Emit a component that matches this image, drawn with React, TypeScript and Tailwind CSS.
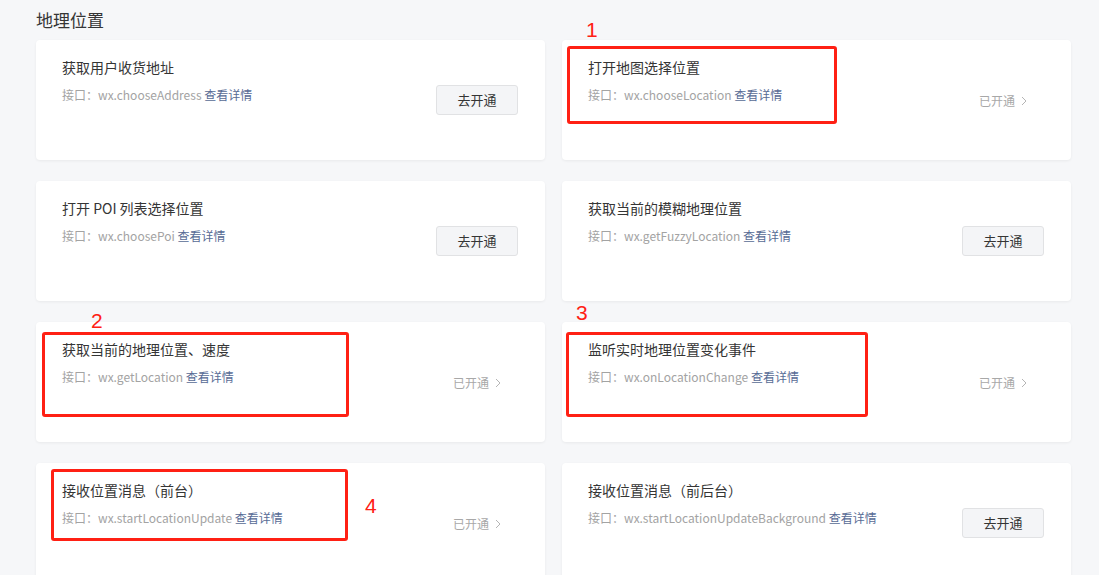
import React from "react"

type Api = {
  title: string
  api: string
  opened: boolean
}

const apis: Api[] = [
  { title: "获取用户收货地址", api: "wx.chooseAddress", opened: false },
  { title: "打开地图选择位置", api: "wx.chooseLocation", opened: true },
  { title: "打开 POI 列表选择位置", api: "wx.choosePoi", opened: false },
  { title: "获取当前的模糊地理位置", api: "wx.getFuzzyLocation", opened: false },
  { title: "获取当前的地理位置、速度", api: "wx.getLocation", opened: true },
  { title: "监听实时地理位置变化事件", api: "wx.onLocationChange", opened: true },
  { title: "接收位置消息（前台）", api: "wx.startLocationUpdate", opened: true },
  { title: "接收位置消息（前后台）", api: "wx.startLocationUpdateBackground", opened: false },
]

// red annotation boxes drawn over the screenshot
const marks = [
  { n: "1", box: "left-[567px] top-[46px] w-[270px] h-[78px]", num: "left-[586px] top-[19px]" },
  { n: "2", box: "left-[42px] top-[332px] w-[307px] h-[85px]", num: "left-[91px] top-[310px]" },
  { n: "3", box: "left-[566px] top-[332px] w-[302px] h-[85px]", num: "left-[576px] top-[302px]" },
  { n: "4", box: "left-[51px] top-[469px] w-[297px] h-[72px]", num: "left-[365px] top-[495px]" },
]

function ApiCard({ item }: { item: Api }) {
  return (
    <div className="h-[120px] bg-white rounded-[4px] shadow-[0_1px_3px_rgba(0,0,0,0.06)] flex pl-[26px] pr-[27px]">
      <div className="flex-1 pt-[17px]">
        <p className="text-[14px] leading-[20px] text-[#353535]">{item.title}</p>
        <p className="mt-[9px] text-[12px] leading-[18px] text-[#a3a3a3]">
          接口：{item.api} <span className="text-[#576b95]">查看详情</span>
        </p>
      </div>
      <div className="w-[82px] flex items-center justify-center">
        {item.opened ? (
          <span className="flex items-center gap-[6px] text-[12px] text-[#a8a8a8] mt-[2px]">
            已开通
            <svg width="6" height="10" viewBox="0 0 6 10" fill="none">
              <path d="M1 1l4 4-4 4" stroke="#b5b5b5" strokeWidth="1" />
            </svg>
          </span>
        ) : (
          <button className="w-[82px] h-[30px] rounded-[3px] bg-[#f4f5f7] border border-[#e1e2e4] text-[13px] text-[#353535]">
            去开通
          </button>
        )}
      </div>
    </div>
  )
}

export default function App() {
  return (
    <div
      className="relative w-[1099px] h-[575px] overflow-hidden bg-[#f6f7f9]"
      style={{ fontFamily: '"Noto Sans CJK SC", "Noto Sans", sans-serif' }}
    >
      <div className="pl-[36px] pr-[28px]">
        <h2 className="pt-[8px] h-[40px] text-[17px] leading-[24px] text-[#353535]">地理位置</h2>
        <div className="grid grid-cols-2 gap-x-[17px] gap-y-[21px]">
          {apis.map((item) => (
            <ApiCard key={item.api} item={item} />
          ))}
        </div>
      </div>

      {marks.map((m) => (
        <React.Fragment key={m.n}>
          <div className={`absolute ${m.box} border-[3px] border-[#ff2014] rounded-[3px]`} />
          <span
            className={`absolute ${m.num} text-[21px] leading-none text-[#ff2014]`}
            style={{ fontFamily: '"Liberation Sans", sans-serif' }}
          >
            {m.n}
          </span>
        </React.Fragment>
      ))}
    </div>
  )
}
